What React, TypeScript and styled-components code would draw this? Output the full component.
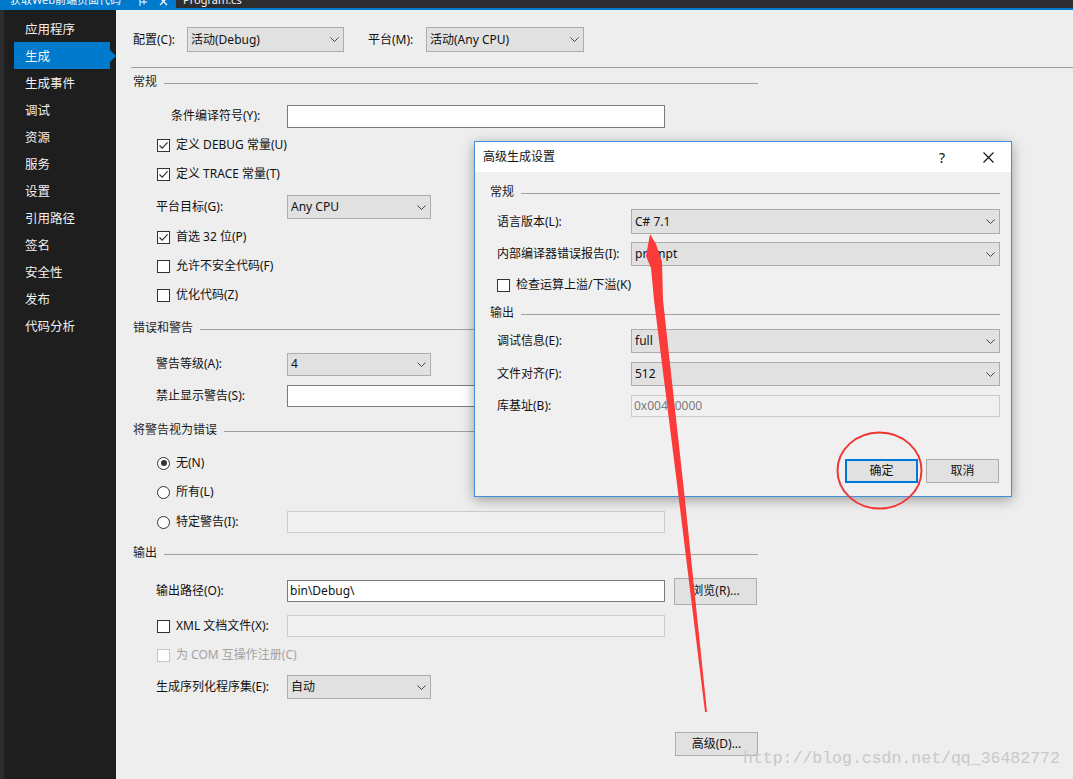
import React from 'react';
import styled, { createGlobalStyle } from 'styled-components';

const GlobalStyle = createGlobalStyle`
  html, body {
    margin: 0;
    padding: 0;
  }
  body {
    background: #eeeeee;
    font-family: 'Noto Sans', 'Noto Sans CJK SC', sans-serif;
    font-size: 12px;
    color: #111;
  }
`;

const navItems = [
  '应用程序',
  '生成',
  '生成事件',
  '调试',
  '资源',
  '服务',
  '设置',
  '引用路径',
  '签名',
  '安全性',
  '发布',
  '代码分析',
];

const Chevron = () => (
  <svg width='9' height='5' viewBox='0 0 9 5'>
    <path d='M0.5 0.5 L4.5 4.5 L8.5 0.5' fill='none' stroke='#444' strokeWidth='1' />
  </svg>
);

const CheckMark = () => (
  <svg width='11' height='11' viewBox='0 0 11 11'>
    <path d='M1.5 5.5 L4.2 8.2 L9.6 2.4' fill='none' stroke='#333' strokeWidth='1.2' />
  </svg>
);

interface SelectProps {
  value: string;
  w: number;
  h?: number;
}

const Select: React.FC<SelectProps> = ({ value, w, h = 24 }) => (
  <SelectBox $w={w} $h={h}>
    <span>{value}</span>
    <Chevron />
  </SelectBox>
);

interface CheckProps {
  label: string;
  checked?: boolean;
  disabled?: boolean;
  mt: number;
  indent?: number;
}

const CheckRow: React.FC<CheckProps> = ({ label, checked, disabled, mt, indent = 24 }) => (
  <Row $mt={mt} $pl={indent}>
    <CheckBox $disabled={disabled}>{checked && <CheckMark />}</CheckBox>
    <OptionText $disabled={disabled}>{label}</OptionText>
  </Row>
);

const RadioRow: React.FC<{ label: string; checked?: boolean; mt: number; children?: React.ReactNode }> = ({
  label,
  checked,
  mt,
  children,
}) => (
  <Row $mt={mt} $pl={24}>
    <Radio>{checked && <RadioDot />}</Radio>
    <OptionText $w={children ? 111 : undefined}>{label}</OptionText>
    {children}
  </Row>
);

const Section: React.FC<{ title: string; mt: number }> = ({ title, mt }) => (
  <SectionRow $mt={mt}>
    <SectionTitle>{title}</SectionTitle>
    <Rule />
  </SectionRow>
);

const App: React.FC = () => {
  return (
    <>
      <GlobalStyle />
      <Page>
        <TabStrip>
          <ActiveTab>
            <TabText>获取Web前端页面代码</TabText>
            <TabIcons>
              <svg width='9' height='9' viewBox='0 0 9 9'>
                <path d='M1 0 V8 M1 4 H8 M5 1.5 V6.5' stroke='#fff' strokeWidth='1' fill='none' />
              </svg>
              <svg width='9' height='9' viewBox='0 0 9 9'>
                <path d='M1 0 L8 7 M8 0 L1 7' stroke='#fff' strokeWidth='1.2' fill='none' />
              </svg>
            </TabIcons>
          </ActiveTab>
          <InactiveTab>
            <TabText>Program.cs</TabText>
          </InactiveTab>
        </TabStrip>

        <Body>
          <Sidebar>
            {navItems.map((item) => (
              <NavItem key={item} $active={item === '生成'}>
                {item}
              </NavItem>
            ))}
          </Sidebar>

          <Main>
            <ConfigBar>
              <ConfigLabel $w={54}>配置(C):</ConfigLabel>
              <Select value='活动(Debug)' w={157} h={25} />
              <ConfigLabel $w={58} $ml={24}>
                平台(M):
              </ConfigLabel>
              <Select value='活动(Any CPU)' w={158} h={25} />
            </ConfigBar>
            <Separator />

            <Form>
              <Section title='常规' mt={2} />
              <Row $mt={10} $pl={23}>
                <FieldLabel $w={131} $indent={15}>
                  条件编译符号(Y):
                </FieldLabel>
                <TextInput $w={378} $h={23} />
              </Row>
              <CheckRow label='定义 DEBUG 常量(U)' checked mt={5} />
              <CheckRow label='定义 TRACE 常量(T)' checked mt={5} />
              <Row $mt={9} $pl={23}>
                <FieldLabel $w={131}>平台目标(G):</FieldLabel>
                <Select value='Any CPU' w={144} />
              </Row>
              <CheckRow label='首选 32 位(P)' checked mt={6} />
              <CheckRow label='允许不安全代码(F)' mt={5} />
              <CheckRow label='优化代码(Z)' mt={5} />

              <Section title='错误和警告' mt={9} />
              <Row $mt={12} $pl={23}>
                <FieldLabel $w={131}>警告等级(A):</FieldLabel>
                <Select value='4' w={144} h={23} />
              </Row>
              <Row $mt={8} $pl={23}>
                <FieldLabel $w={131}>禁止显示警告(S):</FieldLabel>
                <TextInput $w={378} $h={22} />
              </Row>

              <Section title='将警告视为错误' mt={10} />
              <RadioRow label='无(N)' checked mt={9} />
              <RadioRow label='所有(L)' mt={5} />
              <RadioRow label='特定警告(I):' mt={6}>
                <TextInput $w={378} $h={22} $disabled />
              </RadioRow>

              <Section title='输出' mt={7} />
              <Row $mt={14} $pl={23}>
                <FieldLabel $w={131}>输出路径(O):</FieldLabel>
                <TextInput $w={378} $h={22}>
                  bin\Debug\
                </TextInput>
                <PushButton $w={83} $h={27} $ml={9}>
                  浏览(R)...
                </PushButton>
              </Row>
              <Row $mt={11} $pl={24}>
                <CheckBox />
                <OptionText $w={111}>XML 文档文件(X):</OptionText>
                <TextInput $w={378} $h={22} $disabled />
              </Row>
              <CheckRow label='为 COM 互操作注册(C)' disabled mt={5} />
              <Row $mt={8} $pl={23}>
                <FieldLabel $w={131}>生成序列化程序集(E):</FieldLabel>
                <Select value='自动' w={144} />
              </Row>
              <Row $mt={33} $end>
                <PushButton $w={83} $h={24}>
                  高级(D)...
                </PushButton>
              </Row>
            </Form>
          </Main>
        </Body>

        <Dialog>
          <DialogTitleBar>
            <DialogTitle>高级生成设置</DialogTitle>
            <TitleButton>?</TitleButton>
            <TitleButton>
              <svg width='11' height='11' viewBox='0 0 11 11'>
                <path d='M0.5 0.5 L10.5 10.5 M10.5 0.5 L0.5 10.5' stroke='#111' strokeWidth='1.1' fill='none' />
              </svg>
            </TitleButton>
          </DialogTitleBar>
          <DialogBody>
            <Section title='常规' mt={8} />
            <Row $mt={5} $pl={7} $h={25}>
              <FieldLabel $w={134}>语言版本(L):</FieldLabel>
              <Select value='C# 7.1' w={369} h={25} />
            </Row>
            <Row $mt={8} $pl={7}>
              <FieldLabel $w={134}>内部编译器错误报告(I):</FieldLabel>
              <Select value='prompt' w={369} />
            </Row>
            <CheckRow label='检查运算上溢/下溢(K)' mt={7} indent={7} />
            <Section title='输出' mt={4} />
            <Row $mt={4} $pl={7}>
              <FieldLabel $w={134}>调试信息(E):</FieldLabel>
              <Select value='full' w={369} />
            </Row>
            <Row $mt={9} $pl={7}>
              <FieldLabel $w={134}>文件对齐(F):</FieldLabel>
              <Select value='512' w={369} />
            </Row>
            <Row $mt={8} $pl={7}>
              <FieldLabel $w={134}>库基址(B):</FieldLabel>
              <TextInput $w={369} $h={22} $disabled>
                0x00400000
              </TextInput>
            </Row>
            <Row $mt={41} $end>
              <PushButton $w={73} $h={24} $default>
                确定
              </PushButton>
              <PushButton $w={73} $h={24} $ml={8} $mr={1}>
                取消
              </PushButton>
            </Row>
          </DialogBody>
        </Dialog>

        <Annotations width='1073' height='779' viewBox='0 0 1073 779'>
          <polygon
            points='650,234 646,256 651,268 654,300 679,500 705,712 707,712 685,500 663,300 662,262 656,244'
            fill='#fb3a3a'
          />
          <ellipse cx='879.5' cy='470.5' rx='42' ry='38' fill='none' stroke='#ef3535' strokeWidth='2' />
        </Annotations>

        <Watermark>http://blog.csdn.net/qq_36482772</Watermark>
      </Page>
    </>
  );
};

export default App;

const Page = styled.div`
  position: relative;
  width: 1073px;
  height: 779px;
  display: flex;
  flex-direction: column;
  overflow: hidden;
  background: #eeeeee;
`;

const TabStrip = styled.div`
  display: flex;
  height: 10px;
  flex-shrink: 0;
  overflow: hidden;
  background: #2d2d30;
  box-shadow: inset 0 -2px 0 #007acc;
`;

const ActiveTab = styled.div`
  display: flex;
  align-items: flex-start;
  width: 176px;
  flex-shrink: 0;
  padding: 0 8px 0 10px;
  box-sizing: border-box;
  overflow: hidden;
  background: #007acc;
`;

const InactiveTab = styled.div`
  display: flex;
  align-items: flex-start;
  padding-left: 7px;
`;

const TabText = styled.span`
  margin-top: -7px;
  font-size: 11px;
  line-height: 14px;
  color: #f4f4f4;
  white-space: nowrap;
`;

const TabIcons = styled.div`
  display: flex;
  gap: 11px;
  margin-left: auto;
  margin-top: -2px;
`;

const Body = styled.div`
  display: flex;
  flex: 1;
`;

const Sidebar = styled.nav`
  display: flex;
  flex-direction: column;
  width: 116px;
  flex-shrink: 0;
  padding-top: 5px;
  box-sizing: border-box;
  background: #1e1e1e;
  border-left: 4px solid #2d2d30;
`;

const NavItem = styled.div<{ $active?: boolean }>`
  position: relative;
  display: flex;
  align-items: center;
  width: 96px;
  height: 27px;
  margin-left: 10px;
  padding-left: 11px;
  box-sizing: border-box;
  font-size: 12.5px;
  color: #f1f1f1;
  background: ${(p) => (p.$active ? '#007acc' : 'transparent')};

  &::after {
    content: '';
    display: ${(p) => (p.$active ? 'block' : 'none')};
    position: absolute;
    right: -6px;
    top: 8px;
    border-top: 6px solid transparent;
    border-bottom: 6px solid transparent;
    border-left: 6px solid #007acc;
  }
`;

const Main = styled.main`
  display: flex;
  flex-direction: column;
  flex: 1;
  padding: 17px 0 0 17px;
  background: #eeeeee;
`;

const ConfigBar = styled.div`
  display: flex;
  align-items: center;
  height: 25px;
`;

const ConfigLabel = styled.span<{ $w: number; $ml?: number }>`
  width: ${(p) => p.$w}px;
  margin-left: ${(p) => p.$ml ?? 0}px;
  line-height: 16px;
`;

const Separator = styled.div`
  margin: 15px 0 0 -2px;
  border-top: 1px solid #a0a0a0;
`;

const Form = styled.div`
  display: flex;
  flex-direction: column;
  width: 625px;
`;

const Row = styled.div<{ $mt: number; $pl?: number; $h?: number; $end?: boolean }>`
  display: flex;
  align-items: center;
  justify-content: ${(p) => (p.$end ? 'flex-end' : 'flex-start')};
  height: ${(p) => p.$h ?? 24}px;
  margin-top: ${(p) => p.$mt}px;
  padding-left: ${(p) => p.$pl ?? 0}px;
`;

const SectionRow = styled.div<{ $mt: number }>`
  display: flex;
  align-items: center;
  gap: 7px;
  height: 24px;
  margin-top: ${(p) => p.$mt}px;
`;

const SectionTitle = styled.span`
  line-height: 16px;
  color: #1e1e1e;
`;

const Rule = styled.div`
  flex: 1;
  margin-top: 2px;
  border-top: 1px solid #a0a0a0;
`;

const FieldLabel = styled.span<{ $w: number; $indent?: number }>`
  width: ${(p) => p.$w}px;
  flex-shrink: 0;
  padding-left: ${(p) => p.$indent ?? 0}px;
  box-sizing: border-box;
  line-height: 16px;
  white-space: nowrap;
`;

const SelectBox = styled.div<{ $w: number; $h: number }>`
  display: flex;
  align-items: center;
  justify-content: space-between;
  width: ${(p) => p.$w}px;
  height: ${(p) => p.$h}px;
  flex-shrink: 0;
  padding: 0 4px 0 3px;
  box-sizing: border-box;
  background: #e1e1e1;
  border: 1px solid #adadad;
  line-height: 16px;
  white-space: nowrap;
`;

const TextInput = styled.div<{ $w: number; $h: number; $disabled?: boolean }>`
  display: flex;
  align-items: center;
  width: ${(p) => p.$w}px;
  height: ${(p) => p.$h}px;
  flex-shrink: 0;
  padding-left: 2px;
  box-sizing: border-box;
  background: ${(p) => (p.$disabled ? '#f0f0f0' : '#ffffff')};
  border: 1px solid ${(p) => (p.$disabled ? '#cccccc' : '#7a7a7a')};
  color: ${(p) => (p.$disabled ? '#7a7a7a' : '#111')};
  line-height: 16px;
`;

const CheckBox = styled.span<{ $disabled?: boolean }>`
  display: flex;
  align-items: center;
  justify-content: center;
  width: 13px;
  height: 13px;
  flex-shrink: 0;
  margin-right: 6px;
  box-sizing: border-box;
  background: #ffffff;
  border: 1px solid ${(p) => (p.$disabled ? '#c4c4c4' : '#333333')};
`;

const Radio = styled.span`
  display: flex;
  align-items: center;
  justify-content: center;
  width: 13px;
  height: 13px;
  flex-shrink: 0;
  margin-right: 6px;
  box-sizing: border-box;
  border-radius: 50%;
  background: #ffffff;
  border: 1px solid #333333;
`;

const RadioDot = styled.span`
  width: 6px;
  height: 6px;
  border-radius: 50%;
  background: #333333;
`;

const OptionText = styled.span<{ $disabled?: boolean; $w?: number }>`
  width: ${(p) => (p.$w ? `${p.$w}px` : 'auto')};
  flex-shrink: 0;
  line-height: 16px;
  white-space: nowrap;
  color: ${(p) => (p.$disabled ? '#a2a2a2' : '#111')};
`;

const PushButton = styled.div<{ $w: number; $h: number; $ml?: number; $mr?: number; $default?: boolean }>`
  display: flex;
  align-items: center;
  justify-content: center;
  width: ${(p) => p.$w}px;
  height: ${(p) => p.$h}px;
  flex-shrink: 0;
  margin-left: ${(p) => p.$ml ?? 0}px;
  margin-right: ${(p) => p.$mr ?? 0}px;
  box-sizing: border-box;
  background: #e1e1e1;
  border: ${(p) => (p.$default ? '2px solid #0078d7' : '1px solid #adadad')};
  line-height: 16px;
`;

const Dialog = styled.section`
  position: absolute;
  left: 474px;
  top: 141px;
  width: 538px;
  height: 356px;
  box-sizing: border-box;
  display: flex;
  flex-direction: column;
  background: #f0f0f0;
  border: 1px solid #3f8fdc;
  box-shadow: 0 3px 12px rgba(0, 0, 0, 0.35);
`;

const DialogTitleBar = styled.div`
  display: flex;
  align-items: center;
  height: 30px;
  padding-left: 8px;
  background: #ffffff;
`;

const DialogTitle = styled.span`
  flex: 1;
  line-height: 16px;
  color: #111;
`;

const TitleButton = styled.span`
  display: flex;
  align-items: center;
  justify-content: center;
  width: 46px;
  height: 30px;
  font-size: 14px;
  color: #111;
`;

const DialogBody = styled.div`
  display: flex;
  flex-direction: column;
  padding: 0 11px 0 15px;
`;

const Annotations = styled.svg`
  position: absolute;
  left: 0;
  top: 0;
  pointer-events: none;
`;

const Watermark = styled.span`
  position: absolute;
  left: 743px;
  top: 749px;
  font-family: 'Liberation Mono', monospace;
  font-size: 16.5px;
  line-height: 20px;
  color: #c8c8c8;
  white-space: nowrap;
  pointer-events: none;
`;
